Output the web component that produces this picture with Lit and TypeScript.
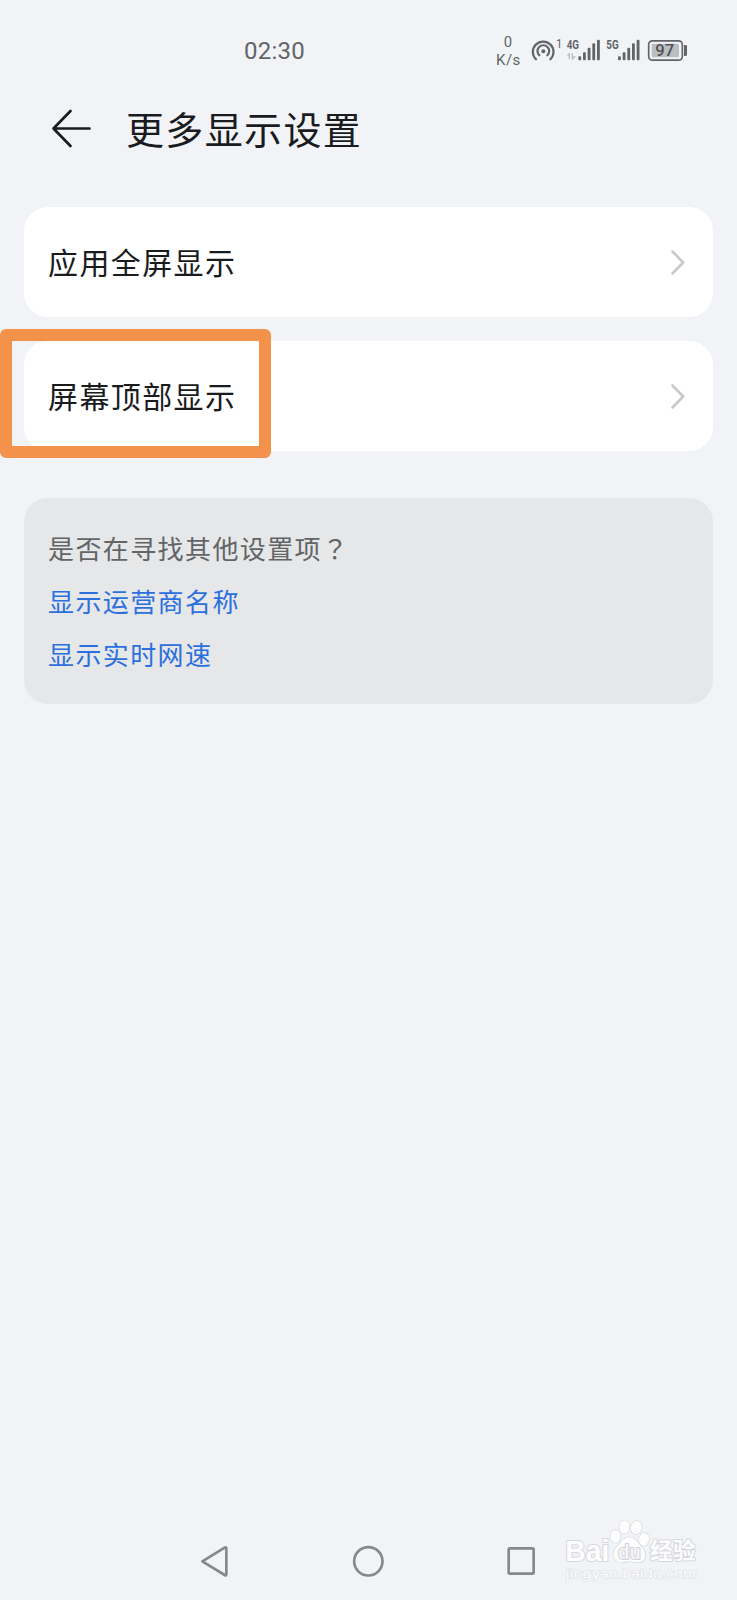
import { LitElement, html, css, svg } from "lit";
import { customElement, property } from "lit/decorators.js";

@customElement("status-bar")
class StatusBar extends LitElement {
  static styles = css`
    :host { display: flex; height: 60px; padding-top: 20px; justify-content: space-between; color: #626467; }
    .time { margin: 17px 0 0 244px; font: 24px/28px Roboto, sans-serif; letter-spacing: 0.25px; }
    svg { width: 220px; height: 60px; margin-right: 37px; display: block; font-family: Roboto, sans-serif; }
  `;
  render() {
    const bars = (x: number) =>
      [[0, 12], [14, 24], [28, 38], [42, 51], [56, 62]].map(
        ([dx, h]) => svg`<rect x=${x + dx} y=${121 - h} width="8.5" height=${h} rx="3" fill="#626467"/>`
      );
    return html`
      <div class="time">02:30</div>
      <svg viewBox="0 0 660 180" fill="#626467">
        <text x="71" y="81" font-size="46" textLength="25" lengthAdjust="spacingAndGlyphs">0</text>
        <text x="48" y="136" font-size="45" textLength="73">K/s</text>
        <g fill="none" stroke="#626467" stroke-width="6.5" stroke-linecap="round">
          <path d="M168 118 A31 31 0 1 1 211 118"/>
          <path d="M178 106 A17.5 17.5 0 1 1 202 106"/>
        </g>
        <circle cx="190" cy="94" r="6"/>
        <text x="228" y="83" font-size="36" textLength="19" lengthAdjust="spacingAndGlyphs">1</text>
        <text x="260" y="87" font-size="37" font-weight="700" textLength="37" lengthAdjust="spacingAndGlyphs">4G</text>
        <path d="M260 107 L267 99 L270 99 L270 118 L266 118 L266 107 Z M275 99 L279 99 L279 109 L288 109 L278 119 L275 119 Z" fill="#bfc0c3"/>
        ${bars(295)}
        <text x="379" y="87" font-size="37" font-weight="700" textLength="37" lengthAdjust="spacingAndGlyphs">5G</text>
        ${bars(414)}
        <rect x="506" y="62.500" width="101" height="58" rx="11" fill="none" stroke="#626467" stroke-width="5"/>
        <rect x="515" y="71" width="82" height="41" rx="5" fill="#bdbec1"/>
        <path d="M612 75 H617 Q621 75 621 79 V103 Q621 108 617 108 H612 Z"/>
        <text x="526" y="109" font-size="49" font-weight="500" textLength="57" lengthAdjust="spacingAndGlyphs" fill="#505255">97</text>
      </svg>`;
  }
}

@customElement("setting-row")
class SettingRow extends LitElement {
  @property() label = "";
  static styles = css`
    :host { display: flex; align-items: center; justify-content: space-between; height: 110px;
      box-sizing: border-box; padding: 0 28px 0 24px; border-radius: 24px; background: #fff; }
    .label { font: 30px/44px "Noto Sans CJK SC", sans-serif; letter-spacing: 1.4px; color: #1a1b1d; padding-bottom: 2px; }
    svg { width: 14px; height: 26px; display: block; }
  `;
  render() {
    return html`<span class="label">${this.label}</span>
      <svg viewBox="0 0 14 26" fill="none" stroke="#c9c9ca" stroke-width="2.6" stroke-linecap="round" stroke-linejoin="round">
        <path d="M1.500 2.500 L12.200 13.500 L1.500 24.500"/>
      </svg>`;
  }
}

@customElement("app-root")
class AppRoot extends LitElement {
  static styles = css`
    :host { display: flex; flex-direction: column; position: relative; width: 737px; height: 1600px;
      overflow: hidden; background: #f1f3f7; font-family: "Noto Sans CJK SC", sans-serif; }
    header { display: flex; align-items: center; height: 98px; padding: 0 0 2px 51px; }
    .back { width: 41px; height: 40px; }
    h1 { margin: 0 0 0 34px; padding-bottom: 3px; font-size: 38px; line-height: 56px; font-weight: 400; letter-spacing: 1.35px; color: #1a1b1e; }
    .list { display: grid; gap: 24px; padding: 27px 24px 0; }
    .help { margin: 47px 24px 0; height: 206px; box-sizing: border-box; padding: 23px 24px; border-radius: 24px;
      background: #e5e7e9; font-size: 26px; letter-spacing: 1.4px; line-height: 53px; color: #626466; }
    .help p { margin: 0; }
    .help .mid { font-family: "Noto Sans CJK TC", sans-serif; }
    .help .link { color: #2c6fdd; }
    nav { display: flex; justify-content: center; margin-top: auto; height: 80px; }
    nav svg { width: 370px; height: 80px; margin-left: -7px; }
    .highlight { position: absolute; left: 0; top: 329px; width: 271px; height: 129px; box-sizing: border-box;
      border: 12px solid #f3924b; border-radius: 6px; }
    .mark { position: absolute; left: 550px; top: 1510px; width: 160px; height: 80px; }
  `;
  render() {
    return html`
      <status-bar></status-bar>
      <header>
        <svg class="back" viewBox="0 0 41 40" fill="none" stroke="#1a1b1e" stroke-width="2.7" stroke-linecap="round" stroke-linejoin="round">
          <path d="M19.500 2 L2.500 19.500 L19.500 37 M2.500 19.500 H38.500"/>
        </svg>
        <h1>更多显示设置</h1>
      </header>
      <main class="list">
        <setting-row label="应用全屏显示"></setting-row>
        <setting-row label="屏幕顶部显示"></setting-row>
      </main>
      <section class="help">
        <p>是否在寻找其他设置项<span class="mid" lang="zh-TW">？</span></p>
        <p class="link">显示运营商名称</p>
        <p class="link">显示实时网速</p>
      </section>
      <nav>
        <svg viewBox="0 0 1110 240" fill="none" stroke="#86888b" stroke-width="8" stroke-linejoin="round">
          <path d="M67 124 L134 83 Q139 80 139 86 V162 Q139 168 134 165 Z"/>
          <circle cx="565" cy="124" r="42.500"/>
          <rect x="986" y="85" width="75" height="76" rx="4"/>
        </svg>
      </nav>
      <div class="highlight"></div>
      <svg class="mark" viewBox="0 0 480 240" fill="#fdfdfe" stroke="#d6d8dc" stroke-width="4" paint-order="stroke" stroke-linejoin="round">
        <text x="46" y="153" font-family="Liberation Sans" font-weight="700" font-size="86" textLength="132" lengthAdjust="spacingAndGlyphs" stroke-width="6">Bai</text>
        <ellipse cx="196" cy="79" rx="15" ry="19"/>
        <ellipse cx="223" cy="51" rx="15" ry="20"/>
        <ellipse cx="259" cy="53" rx="16" ry="20" transform="rotate(12 259 53)"/>
        <ellipse cx="282" cy="88" rx="15" ry="19" transform="rotate(12 282 88)"/>
        <path d="M238 82 C218 82 215 99 201 110 C184 123 188 157 214 157 C228 157 231 154 239 154 C248 154 253 158 265 157 C290 155 292 127 277 113 C263 101 259 82 238 82 Z"/>
        <text x="205" y="147" font-family="Liberation Sans" font-weight="700" font-size="58" textLength="67" lengthAdjust="spacingAndGlyphs" fill="#f4f5f8" stroke="#cfd1d5" stroke-width="6">du</text>
        <text x="300" y="148" font-family="Noto Sans CJK SC" font-weight="700" font-size="68" textLength="137" stroke-width="6">经验</text>
        <text x="47" y="203" font-family="DejaVu Sans" font-size="35" textLength="393" lengthAdjust="spacingAndGlyphs" stroke="#e0e2e6">jingyan.baidu.com</text>
      </svg>`;
  }
}
